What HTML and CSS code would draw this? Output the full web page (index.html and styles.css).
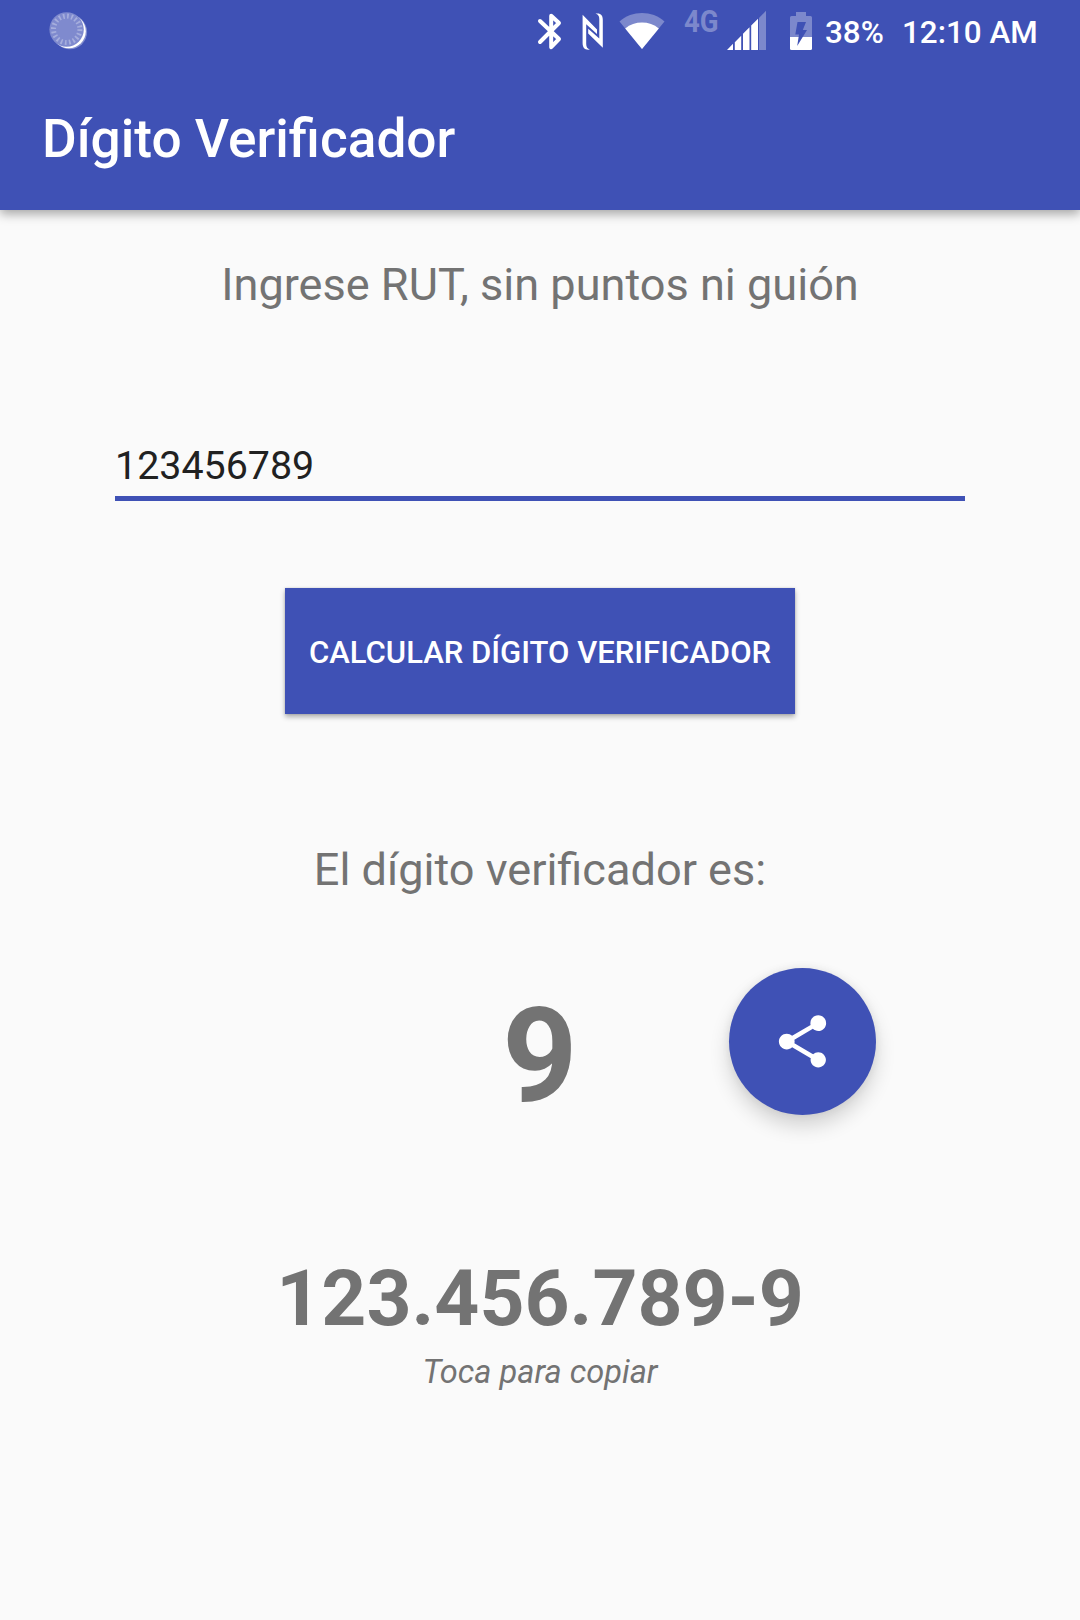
FILE: index.html
```html
<!DOCTYPE html>
<html lang="es">
<head>
<meta charset="utf-8">
<title>Dígito Verificador</title>
<link rel="stylesheet" href="styles.css">
</head>
<body>
<header class="app-bar">
  <div class="status-bar">
    <svg class="spinner" width="44" height="44" viewBox="46 8 44 44">
      <circle cx="69.8" cy="32" r="17.3" fill="#fff" opacity=".35"/>
      <circle cx="68.8" cy="31.2" r="17" fill="#fff"/>
      <circle cx="66.6" cy="29.5" r="17.2" fill="#7f8ace"/>
      <circle cx="66.7" cy="29.3" r="13.2" fill="none" stroke="#a6aedd" stroke-width="5" stroke-dasharray="1.7 2.447"/>
    </svg>
    <div class="status-icons">
      <svg width="28" height="44" viewBox="536 10 28 44">
        <path d="M540 21 L559 39 L551.2 47.2 V15.8 L559 23 L540 42" fill="none" stroke="#fff" stroke-width="4" stroke-linecap="round" stroke-linejoin="round"/>
      </svg>
      <svg class="nfc" width="24" height="44" viewBox="581 10 24 44">
        <path d="M582.6 14.8 L597 29.5 V34 L586.2 24.3 V44 C586.2 47 587.5 49 590 49.5 C585 50.3 582.6 48 582.6 43 Z" fill="#fff"/>
        <path d="M602.8 47.8 L588.2 33.5 V28.8 L599.3 38.5 V19 C599.3 16 598 14 595.5 13.7 C600.5 12.8 602.8 15 602.8 20 Z" fill="#fff"/>
      </svg>
      <svg class="wifi" width="48" height="44" viewBox="618 10 48 44">
        <path d="M642 49 L619.5 21.5 C632 10.2 652 10.2 664.5 21.5 Z" fill="#7c88cc"/>
        <path d="M642 49 L625.2 28.5 C634.5 20.6 649.5 20.6 658.8 28.5 Z" fill="#fff"/>
      </svg>
      <span class="network">4G</span>
      <svg class="signal" width="40" height="44" viewBox="727 10 40 44">
        <path d="M759 18 L766 10.8 V50 H759 Z" fill="#7c88cc"/>
        <path d="M727 50 L733 43.8 V50 Z M734.8 42.2 L741.2 35.7 V50 H734.8 Z M743 33.8 L749.5 27.3 V50 H743 Z M751.2 25.5 L758 18.7 V50 H751.2 Z" fill="#fff"/>
      </svg>
      <svg class="battery" width="22" height="44" viewBox="790 10 22 44">
        <path d="M796 12 H806 V16 H810.5 Q812 16 812 17.5 V37 H790 V17.5 Q790 16 791.5 16 H796 Z" fill="#7c88cc"/>
        <path d="M790 37 H812 V48.5 Q812 50 810.5 50 H791.5 Q790 50 790 48.5 Z" fill="#fff"/>
        <path d="M797.5 22 H806 L802.8 30 H807 L797.2 46 L799 34.5 H795.3 Z" fill="#3f51b5"/>
      </svg>
      <span class="status-text level">38%</span>
      <span class="status-text clock">12:10 AM</span>
    </div>
  </div>
  <h1 class="title">Dígito Verificador</h1>
</header>
<main class="content">
  <p class="label">Ingrese RUT, sin puntos ni guión</p>
  <div class="field">123456789</div>
  <button class="calculate">CALCULAR DÍGITO VERIFICADOR</button>
  <p class="label result-label">El dígito verificador es:</p>
  <div class="result-row">
    <span class="digit">9</span>
    <button class="fab" aria-label="Compartir">
      <svg width="63" height="63" viewBox="0 0 24 24" fill="#fff">
        <path d="M18 16.08c-.76 0-1.44.3-1.96.77L8.91 12.7c.05-.23.09-.46.09-.7s-.04-.47-.09-.7l7.05-4.11c.54.5 1.25.81 2.04.81 1.66 0 3-1.34 3-3s-1.34-3-3-3-3 1.34-3 3c0 .24.04.47.09.7L8.04 9.81C7.5 9.31 6.79 9 6 9c-1.66 0-3 1.34-3 3s1.34 3 3 3c.79 0 1.5-.31 2.04-.81l7.12 4.16c-.05.21-.08.43-.08.65 0 1.61 1.31 2.92 2.92 2.92 1.61 0 2.92-1.31 2.92-2.92s-1.31-2.92-2.92-2.92z"/>
      </svg>
    </button>
  </div>
  <p class="full-rut">123.456.789-9</p>
  <p class="hint">Toca para copiar</p>
</main>
</body>
</html>
```
FILE: styles.css
```css
* {
  box-sizing: border-box;
}

body {
  margin: 0;
  min-height: 1620px;
  background: #fafafa;
  color: #737373;
  font-family: Roboto, "Liberation Sans", sans-serif;
}

p, h1 {
  margin: 0;
}

button {
  border: 0;
  padding: 0;
  background: #3f51b5;
  color: #fff;
  font-family: inherit;
}

svg {
  display: block;
  flex: none;
}

.app-bar {
  height: 210px;
  background: #3f51b5;
  color: #fff;
  box-shadow: 0 4px 10px rgba(0, 0, 0, .34);
}

.status-bar {
  display: flex;
  justify-content: space-between;
  height: 63px;
  padding: 8px 42px 0 46px;
}

.status-icons {
  display: flex;
  padding-top: 2px;
}

.nfc {
  margin-left: 17px;
}

.wifi {
  margin-left: 13px;
}

.network {
  width: 35px;
  margin-left: 18px;
  color: #7c88cc;
  font-size: 31px;
  font-weight: 700;
  line-height: 23px;
  transform: scaleX(.89);
  transform-origin: left;
}

.signal {
  margin-left: 8px;
}

.battery {
  margin-left: 23px;
}

.status-text {
  font-size: 31.4px;
  font-weight: 500;
  line-height: 46px;
  white-space: nowrap;
}

.level {
  width: 77px;
  margin-left: 13px;
}

.clock {
  width: 136px;
}

.title {
  padding: 47px 0 0 42px;
  font-size: 53.2px;
  font-weight: 500;
  line-height: 59px;
}

.content {
  display: flex;
  flex-direction: column;
  align-items: center;
  padding-top: 45px;
}

.label {
  font-size: 45.1px;
  line-height: 60px;
}

.field {
  width: 850px;
  height: 66px;
  margin-top: 120px;
  border-bottom: 5px solid #3f51b5;
  color: #212121;
  font-size: 39.4px;
  line-height: 61px;
}

.calculate {
  width: 510px;
  height: 126px;
  margin-top: 87px;
  padding-top: 2px;
  font-size: 31.05px;
  font-weight: 500;
  white-space: nowrap;
  box-shadow: 0 3px 5px rgba(0, 0, 0, .3), 0 0 2px rgba(0, 0, 0, .15);
}

.result-label {
  margin-top: 126px;
}

.result-row {
  display: grid;
  grid-template-columns: 1fr 147px 1fr;
  width: 100%;
  height: 147px;
  margin-top: 68px;
}

.digit {
  grid-column: 2;
  padding-top: 15px;
  font-size: 131.25px;
  font-weight: 700;
  line-height: 147px;
  text-align: center;
}

.fab {
  display: grid;
  place-items: center;
  width: 147px;
  height: 147px;
  margin-left: 115.5px;
  border-radius: 50%;
  box-shadow: 0 11px 20px rgba(0, 0, 0, .16), 0 0 8px rgba(0, 0, 0, .07);
}

.full-rut {
  margin-top: 133px;
  font-size: 78.6px;
  font-weight: 700;
  line-height: 100px;
}

.hint {
  margin-top: 4px;
  font-size: 32.6px;
  font-style: italic;
  line-height: 40px;
}
```
